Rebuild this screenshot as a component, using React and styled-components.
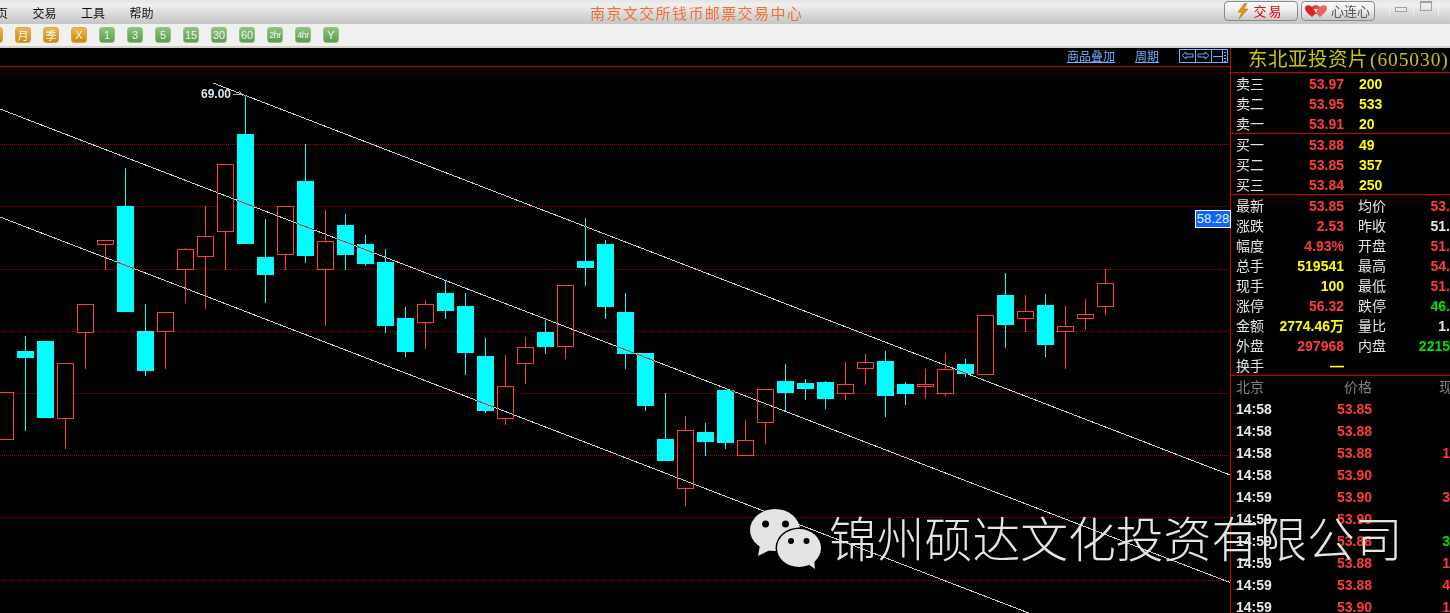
import styled, { createGlobalStyle } from "styled-components";

const RED = "#ff3c3c";
const CYAN = "#00ffff";
const LINE_RED = "#c80000";
const GRID_RED = "#b00000";

// [type, wickTop, bodyTop, bodyBottom, wickBottom], one candle every 20px from x=5
const candles = [
  ["r", 392, 392, 440, 440],
  ["c", 336, 351, 358, 431],
  ["c", 341, 341, 418, 418],
  ["r", 363, 363, 419, 449],
  ["r", 304, 304, 333, 369],
  ["r", 240, 240, 245, 270],
  ["c", 168, 206, 312, 312],
  ["c", 304, 331, 371, 376],
  ["r", 312, 312, 332, 369],
  ["r", 248, 249, 270, 303],
  ["r", 206, 236, 257, 309],
  ["r", 164, 164, 232, 270],
  ["c", 95, 134, 244, 244],
  ["c", 219, 257, 275, 303],
  ["r", 206, 206, 255, 270],
  ["c", 144, 181, 256, 263],
  ["r", 210, 241, 270, 326],
  ["c", 214, 225, 255, 270],
  ["c", 235, 244, 264, 266],
  ["c", 249, 262, 326, 333],
  ["c", 307, 318, 352, 357],
  ["r", 300, 304, 323, 349],
  ["c", 281, 293, 311, 319],
  ["c", 293, 306, 353, 375],
  ["c", 338, 356, 411, 413],
  ["r", 355, 386, 419, 425],
  ["r", 337, 347, 364, 384],
  ["c", 319, 332, 347, 354],
  ["r", 285, 285, 347, 359],
  ["c", 218, 261, 268, 286],
  ["c", 240, 244, 307, 319],
  ["c", 293, 312, 354, 369],
  ["c", 353, 353, 406, 411],
  ["c", 393, 439, 461, 461],
  ["r", 416, 430, 489, 506],
  ["c", 423, 432, 442, 456],
  ["c", 390, 390, 443, 449],
  ["r", 420, 440, 456, 456],
  ["r", 389, 389, 423, 444],
  ["c", 364, 381, 393, 411],
  ["c", 379, 383, 389, 400],
  ["c", 381, 382, 399, 409],
  ["r", 362, 384, 394, 400],
  ["r", 354, 362, 369, 385],
  ["c", 351, 361, 396, 417],
  ["c", 382, 384, 394, 405],
  ["r", 369, 384, 387, 399],
  ["r", 353, 369, 394, 396],
  ["c", 359, 364, 374, 377],
  ["r", 315, 315, 375, 375],
  ["c", 273, 295, 325, 348],
  ["r", 295, 311, 319, 332],
  ["c", 294, 305, 345, 357],
  ["r", 306, 326, 332, 369],
  ["r", 299, 314, 319, 330],
  ["r", 269, 283, 307, 315],
];

const gridRows = [144, 206, 269, 331, 393, 455, 517, 580];

const asks = [
  ["卖三", "53.97", "200"],
  ["卖二", "53.95", "533"],
  ["卖一", "53.91", "20"],
];

const bids = [
  ["买一", "53.88", "49"],
  ["买二", "53.85", "357"],
  ["买三", "53.84", "250"],
];

const stats = [
  ["最新", "53.85", RED, "均价", "53.", RED],
  ["涨跌", "2.53", RED, "昨收", "51.", "#e8e8e8"],
  ["幅度", "4.93%", RED, "开盘", "51.", RED],
  ["总手", "519541", "#ffff00", "最高", "54.", RED],
  ["现手", "100", "#ffff00", "最低", "51.", RED],
  ["涨停", "56.32", RED, "跌停", "46.", "#00e000"],
  ["金额", "2774.46万", "#ffff00", "量比", "1.", "#e8e8e8"],
  ["外盘", "297968", RED, "内盘", "2215", "#00e000"],
  ["换手", "—", "#ffff00", "", "", ""],
];

const trades = [
  ["14:58", "53.85", "", ""],
  ["14:58", "53.88", "", ""],
  ["14:58", "53.88", "1", RED],
  ["14:58", "53.90", "", ""],
  ["14:59", "53.90", "3", RED],
  ["14:59", "53.90", "", ""],
  ["14:59", "53.88", "3", "#00e000"],
  ["14:59", "53.88", "1", RED],
  ["14:59", "53.88", "4", RED],
  ["14:59", "53.90", "1", RED],
];

const periods = ["月", "季", "X", "1", "3", "5", "15", "30", "60", "2hr", "4hr", "Y"];

const GlobalStyle = createGlobalStyle`
  html, body {
    margin: 0;
    background: #000;
    overflow: hidden;
  }
`;

const Page = styled.div`
  position: relative;
  display: flex;
  flex-direction: column;
  width: 1450px;
  height: 613px;
  overflow: hidden;
  background: #000;
  font-family: "Noto Sans CJK SC", "Liberation Sans", sans-serif;
`;

const TitleBar = styled.div`
  display: flex;
  align-items: center;
  flex: 0 0 24px;
  background: linear-gradient(#e4e4e4, #f0f0f0 20%, #d8d8d8 60%, #c6c6c6);
  overflow: hidden;
`;

const Menu = styled.div`
  display: flex;
  gap: 24.5px;
  margin-left: -16px;
  width: 169px;
  flex: none;
  font-size: 12px;
  white-space: nowrap;
  color: #111;
`;

const AppTitle = styled.div`
  margin-left: 437px;
  font-size: 15px;
  letter-spacing: 1.4px;
  color: #f0703a;
  white-space: nowrap;
`;

const Actions = styled.div`
  display: flex;
  align-items: center;
  gap: 3px;
  margin-left: auto;
  margin-right: -12px;
  height: 100%;
`;

const ActionButton = styled.div`
  display: flex;
  align-items: center;
  justify-content: center;
  gap: 4px;
  box-sizing: border-box;
  width: 74px;
  height: 20px;
  margin-top: -3px;
  border: 1px solid #8a8a8a;
  border-radius: 4px;
  background: linear-gradient(#fafafa, #eeeeee 45%, #c8c8c8);
  font-size: 13px;
  white-space: nowrap;
  letter-spacing: ${(p) => (p.$hot ? "2px" : "0")};
  color: ${(p) => (p.$hot ? "#f00000" : "#555")};
`;

const WindowButtons = styled.div`
  display: flex;
  margin-left: 11px;
  height: 100%;
`;

const WindowButton = styled.div`
  display: flex;
  justify-content: center;
  box-sizing: border-box;
  width: 24.5px;
  height: 16px;
  border-left: 1px solid #f0f0f0;
`;

const MinGlyph = styled.span`
  box-sizing: border-box;
  width: 12px;
  height: 5px;
  margin-top: 7px;
  border: 1px solid #a0a0a0;
  background: #e8e8e8;
`;

const MaxGlyph = styled.span`
  box-sizing: border-box;
  width: 12px;
  height: 10px;
  margin-top: 1px;
  border: 1px solid #a0a0a0;
  border-top-width: 2px;
`;

const ToolBar = styled.div`
  display: flex;
  align-items: center;
  gap: 12px;
  flex: 0 0 22px;
  margin-left: -13px;
  box-sizing: border-box;
  background: #f0f0f0;
`;

const Divider = styled.div`
  flex: 0 0 2px;
  background: #d4d0c8;
`;

const PeriodButton = styled.div`
  display: flex;
  align-items: center;
  justify-content: center;
  flex: none;
  box-sizing: border-box;
  width: 16px;
  height: 16px;
  border-radius: 3px;
  border: 1px solid ${(p) => (p.$gold ? "#d8a848" : "#94c088")};
  background: ${(p) =>
    p.$gold
      ? "linear-gradient(#e8bc50, #c88a08)"
      : "linear-gradient(#8cc47c, #5e9a52)"};
  font-family: "Liberation Sans", "Noto Sans CJK SC", sans-serif;
  font-size: ${(p) => (p.$tiny ? "9px" : "11px")};
  letter-spacing: ${(p) => (p.$tiny ? "-0.5px" : "0")};
  color: #f4f4f4;
  white-space: nowrap;
  overflow: hidden;
`;

const Main = styled.div`
  display: flex;
  flex: 1;
  min-height: 0;
`;

const ChartArea = styled.div`
  display: flex;
  flex-direction: column;
  flex: 0 0 1230px;
`;

const ChartHeader = styled.div`
  display: flex;
  align-items: center;
  justify-content: flex-end;
  flex: 0 0 19px;
  box-sizing: border-box;
  padding-bottom: 3px;
  padding-right: 2px;
  border-bottom: 1px solid ${LINE_RED};
`;

const ChartLink = styled.span`
  margin-right: ${(p) => p.$gap}px;
  font-size: 12px;
  line-height: 14px;
  color: #6ab0ff;
  text-decoration: underline;
`;

const ChartIcon = styled.div`
  display: flex;
  box-sizing: border-box;
  width: 17px;
  height: 14px;
  margin-left: -1px;
  border: 1px solid #6ab0ff;
`;

const Plot = styled.div`
  position: relative;
  flex: 1;
`;

const PlotSvg = styled.svg`
  display: block;
`;

const ChannelLines = styled.g`
  mix-blend-mode: difference;
`;

const PriceTag = styled.div`
  position: absolute;
  top: 143px;
  right: -1px;
  box-sizing: border-box;
  width: 36px;
  height: 18px;
  border: 1px solid #fff;
  background: #0a64ff;
  font-family: "Liberation Sans", sans-serif;
  font-size: 13px;
  line-height: 16px;
  text-align: center;
  color: #e8f0ff;
`;

const HighTag = styled.div`
  position: absolute;
  top: 20px;
  left: 201px;
  font-family: "Liberation Sans", sans-serif;
  font-size: 12px;
  font-weight: bold;
  line-height: 14px;
  color: #d8e4f4;
`;

const SidePanel = styled.div`
  flex: 1;
  min-width: 0;
  border-left: 1px solid ${LINE_RED};
  overflow: hidden;
`;

const StockTitle = styled.div`
  box-sizing: border-box;
  height: 25px;
  padding-left: 17px;
  border-bottom: 1px solid ${LINE_RED};
  font-family: "Liberation Serif", "Noto Sans CJK SC", serif;
  font-size: 19.5px;
  letter-spacing: 0.5px;
  line-height: 24px;
  color: #c8c800;
  white-space: nowrap;
`;

const StockCode = styled.span`
  margin-left: 2px;
  letter-spacing: 0.9px;
`;

const Section = styled.div`
  border-bottom: 1px solid ${LINE_RED};
`;

const OrderRow = styled.div`
  display: grid;
  grid-template-columns: 30px 78px 1fr;
  box-sizing: border-box;
  height: 20px;
  padding: 0 0 2px 5px;
  align-items: center;
`;

const StatRow = styled.div`
  display: grid;
  grid-template-columns: 30px 78px 30px 1fr;
  box-sizing: border-box;
  height: 20px;
  padding: 0 0 2px 5px;
  align-items: center;
`;

const TradeRow = styled.div`
  display: grid;
  grid-template-columns: 35px 101px 1fr;
  height: 22px;
  padding-left: 5px;
  align-items: center;
`;

const Label = styled.span`
  margin-bottom: 2px;
  font-size: 14px;
  line-height: 20px;
  white-space: nowrap;
  color: ${(p) => p.$color || "#e4e4e4"};
`;

const SecondLabel = styled(Label)`
  margin-right: -14px;
  padding-left: 14px;
`;

const PriceHeading = styled(Label)`
  justify-self: end;
`;

const ClippedLabel = styled(Label)`
  margin-left: 67px;
`;

const Value = styled.span`
  font-family: "Liberation Sans", "Noto Sans CJK SC", sans-serif;
  font-size: 14px;
  font-weight: bold;
  line-height: 20px;
  white-space: nowrap;
  text-align: ${(p) => p.$align || "right"};
  color: ${(p) => p.$color};
`;

const Volume = styled(Value)`
  margin-left: 15px;
`;

const Watermark = styled.div`
  position: absolute;
  left: 750px;
  top: 504px;
  display: flex;
  align-items: center;
  gap: 7px;
  color: #e4e4e4;
`;

const LogoMark = styled.svg`
  margin-top: 4px;
`;

const WatermarkText = styled.span`
  font-size: 47.8px;
  font-weight: 300;
  line-height: 64px;
  white-space: nowrap;
`;

function Bolt() {
  return (
    <svg width="12" height="16" viewBox="0 0 12 16">
      <path d="M8 0 L1 9 L5 9 L2 16 L11 6 L7 6 L10 0 Z" fill="#f09010" stroke="#a06000" strokeWidth="0.5" />
    </svg>
  );
}

function Hearts() {
  return (
    <svg width="22" height="14" viewBox="0 0 22 14">
      <path d="M7 13 C1 8 0 6 0 4 C0 1 4 0 7 3 C10 0 14 1 14 4 C14 6 13 8 7 13 Z" fill="#e02020" />
      <path d="M15 13 C9 8 8 6 8 4 C8 1 12 0 15 3 C18 0 22 1 22 4 C22 6 21 8 15 13 Z" fill="#f04848" opacity="0.85" />
      <path d="M9 5 L13 5 L11 9 Z" fill="#fff" />
    </svg>
  );
}

function Arrow({ left }) {
  const d = left ? "M2 5.5 L6 2 V4 H13 V7 H6 V9 Z" : "M13 5.5 L9 2 V4 H2 V7 H9 V9 Z";
  return (
    <svg width="15" height="12" viewBox="0 0 15 12">
      <path d={d} fill="none" stroke="#6ab0ff" />
    </svg>
  );
}

function Layout() {
  return (
    <svg width="15" height="12" viewBox="0 0 15 12" shapeRendering="crispEdges">
      <path d="M0.5 6.5 H10.5 M10.5 0 V12" stroke="#6ab0ff" fill="none" />
      <path d="M12 2 H14 M12 5 H14 M12 8 H14 M12 11 H14" stroke="#6ab0ff" fill="none" />
    </svg>
  );
}

function WeChat() {
  return (
    <LogoMark width="72" height="62" viewBox="750 507 72 62">
      <ellipse cx="775" cy="529" rx="25" ry="21" fill="#e4e4e4" />
      <path d="M760 544 L758 555 L770 549 Z" fill="#e4e4e4" />
      <circle cx="765.5" cy="523" r="3.5" fill="#000" />
      <circle cx="785.5" cy="523" r="3.5" fill="#000" />
      <ellipse cx="799" cy="547" rx="23.5" ry="20.5" fill="#000" />
      <ellipse cx="799" cy="547" rx="22" ry="19" fill="#e4e4e4" />
      <path d="M808 563 L815 568 L814 558 Z" fill="#e4e4e4" />
      <circle cx="791" cy="540" r="3" fill="#000" />
      <circle cx="806.5" cy="540" r="3" fill="#000" />
    </LogoMark>
  );
}

function Candle({ x, type, wickTop, bodyTop, bodyBottom, wickBottom }) {
  const color = type === "r" ? RED : CYAN;
  return (
    <g>
      <rect x={x} y={wickTop} width="1" height={wickBottom - wickTop} fill={color} />
      {type === "r" ? (
        <rect
          x={x - 7.5}
          y={bodyTop + 0.5}
          width="16"
          height={bodyBottom - bodyTop - 1}
          fill="#000"
          stroke={color}
        />
      ) : (
        <rect x={x - 8} y={bodyTop} width="17" height={bodyBottom - bodyTop} fill={color} />
      )}
    </g>
  );
}

function Chart() {
  return (
    <Plot>
      <PlotSvg width="1230" height="546" viewBox="0 67 1230 546" shapeRendering="crispEdges">
        {gridRows.map((y) => (
          <line key={y} x1="0" x2="1230" y1={y + 0.5} y2={y + 0.5} stroke={GRID_RED} strokeDasharray="1 1" />
        ))}
        {candles.map(([type, wickTop, bodyTop, bodyBottom, wickBottom], i) => (
          <Candle
            key={i}
            x={5 + i * 20}
            type={type}
            wickTop={wickTop}
            bodyTop={bodyTop}
            bodyBottom={bodyBottom}
            wickBottom={wickBottom}
          />
        ))}
        <ChannelLines>
          <line x1="213" y1="83" x2="1230" y2="475" stroke="#cccccc" />
          <line x1="0" y1="109" x2="1230" y2="582.5" stroke="#cccccc" />
          <line x1="0" y1="217" x2="1030" y2="613.5" stroke="#cccccc" />
        </ChannelLines>
        <path d="M233 94.5 H241 M239 91 L243 96" stroke="#b0b0b0" fill="none" />
      </PlotSvg>
      <HighTag>69.00</HighTag>
      <PriceTag>58.28</PriceTag>
    </Plot>
  );
}

export default function App() {
  return (
    <Page>
      <GlobalStyle />
      <TitleBar>
        <Menu>
          <span>首页</span>
          <span>交易</span>
          <span>工具</span>
          <span>帮助</span>
        </Menu>
        <AppTitle>南京文交所钱币邮票交易中心</AppTitle>
        <Actions>
          <ActionButton $hot>
            <Bolt />
            交易
          </ActionButton>
          <ActionButton>
            <Hearts />
            心连心
          </ActionButton>
          <WindowButtons>
            <WindowButton>
              <MinGlyph />
            </WindowButton>
            <WindowButton>
              <MaxGlyph />
            </WindowButton>
            <WindowButton />
          </WindowButtons>
        </Actions>
      </TitleBar>
      <ToolBar>
        <PeriodButton $gold />
        {periods.map((p, i) => (
          <PeriodButton key={p} $gold={i < 3} $tiny={p.length > 2}>
            {p}
          </PeriodButton>
        ))}
      </ToolBar>
      <Divider />
      <Main>
        <ChartArea>
          <ChartHeader>
            <ChartLink $gap={20}>商品叠加</ChartLink>
            <ChartLink $gap={21}>周期</ChartLink>
            <ChartIcon>
              <Arrow left />
            </ChartIcon>
            <ChartIcon>
              <Arrow />
            </ChartIcon>
            <ChartIcon>
              <Layout />
            </ChartIcon>
          </ChartHeader>
          <Chart />
        </ChartArea>
        <SidePanel>
          <StockTitle>
            东北亚投资片<StockCode>(605030)</StockCode>
          </StockTitle>
          <Section>
            {asks.map(([label, price, vol]) => (
              <OrderRow key={label}>
                <Label>{label}</Label>
                <Value $color={RED}>{price}</Value>
                <Volume $color="#ffff00" $align="left">
                  {vol}
                </Volume>
              </OrderRow>
            ))}
          </Section>
          <Section>
            {bids.map(([label, price, vol]) => (
              <OrderRow key={label}>
                <Label>{label}</Label>
                <Value $color={RED}>{price}</Value>
                <Volume $color="#ffff00" $align="left">
                  {vol}
                </Volume>
              </OrderRow>
            ))}
          </Section>
          <Section>
            {stats.map(([label, value, color, label2, value2, color2]) => (
              <StatRow key={label}>
                <Label>{label}</Label>
                <Value $color={color}>{value}</Value>
                <SecondLabel>{label2}</SecondLabel>
                <Value $color={color2}>{value2}</Value>
              </StatRow>
            ))}
          </Section>
          <TradeRow>
            <Label $color="#808080">北京</Label>
            <PriceHeading $color="#808080">价格</PriceHeading>
            <ClippedLabel $color="#808080">现</ClippedLabel>
          </TradeRow>
          {trades.map(([time, price, vol, color], i) => (
            <TradeRow key={i}>
              <Value $color="#e8e8e8" $align="left">
                {time}
              </Value>
              <Value $color={RED}>{price}</Value>
              <Value $color={color}>{vol}</Value>
            </TradeRow>
          ))}
        </SidePanel>
      </Main>
      <Watermark>
        <WeChat />
        <WatermarkText>锦州硕达文化投资有限公司</WatermarkText>
      </Watermark>
    </Page>
  );
}
